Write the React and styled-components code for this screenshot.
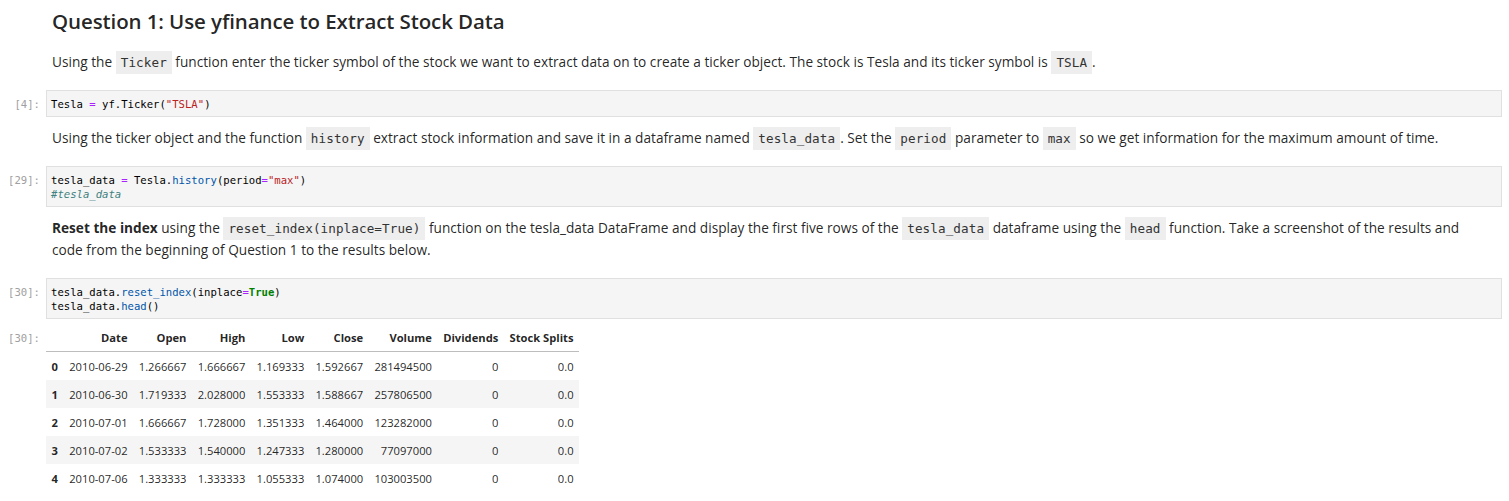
import React from "react";
import styled, { createGlobalStyle } from "styled-components";

const Global = createGlobalStyle`
  html, body { margin: 0; padding: 0; background: #ffffff; }
  body { font-family: "Open Sans", "Noto Sans", sans-serif; color: rgba(0,0,0,0.87); }
`;

const Notebook = styled.div`
  display: flex;
  flex-direction: column;
  padding: 0 7px 0 0;
  width: 1509px;
  box-sizing: border-box;
`;

const Cell = styled.div`
  display: grid;
  grid-template-columns: 40px 1fr;
  column-gap: 6px;
  padding: ${(p) => p.$pad || "0"};
`;

const Prompt = styled.div`
  font-family: "DejaVu Sans Mono", "Liberation Mono", monospace;
  font-size: 10.6px;
  line-height: 14px;
  color: #a0a0a0;
  text-align: right;
  padding-top: ${(p) => p.$top || "7px"};
  white-space: nowrap;
`;

const Markdown = styled.div`
  padding: 0 20px 0 6px;
  min-width: 0;
`;

const Heading = styled.h2`
  margin: 0 0 16px 0;
  font-size: 20.5px;
  line-height: 28px;
  font-weight: 600;
  color: rgba(0,0,0,0.87);
  letter-spacing: -0.1px;
`;

const Para = styled.p`
  margin: 0;
  font-size: 13.67px;
  line-height: 22px;
  color: rgba(0,0,0,0.87);
`;

const Bold = styled.strong`
  font-weight: 700;
`;

const Code = styled.code`
  font-family: "DejaVu Sans Mono", "Liberation Mono", monospace;
  font-size: 12.6px;
  line-height: 1;
  background: #eeeeee;
  color: #333333;
  padding: 4px 5px;
  letter-spacing: 0.1px;
`;

const Editor = styled.pre`
  margin: 0;
  background: #f5f5f5;
  border: 1px solid #e0e0e0;
  padding: 6px 4px 5px;
  font-family: "DejaVu Sans Mono", "Liberation Mono", monospace;
  font-size: 10.6px;
  line-height: 14px;
  color: #000000;
`;

const Tok = styled.span`
  color: ${(p) =>
    ({
      op: "#aa22ff",
      str: "#ba2121",
      prop: "#0055aa",
      kw: "#008000",
      cm: "#408080",
    })[p.$t] || "inherit"};
  font-weight: ${(p) => (p.$t === "kw" ? 700 : 400)};
  font-style: ${(p) => (p.$t === "cm" ? "italic" : "normal")};
`;

const Output = styled.div`
  padding-top: 4px;
`;

const Table = styled.table`
  border-collapse: collapse;
  border-spacing: 0;
  font-size: 11.2px;
  color: rgba(0,0,0,0.87);
`;

const THead = styled.thead`
  border-bottom: 1px solid #bdbdbd;
`;

const Th = styled.th`
  text-align: right;
  font-weight: 700;
  padding: 5.5px 5.6px;
  line-height: 17px;
  white-space: nowrap;
`;

const Row = styled.tr`
  background: ${(p) => (p.$odd ? "#f5f5f5" : "#ffffff")};
`;

const Td = styled.td`
  text-align: right;
  padding: 5.5px 5.6px;
  line-height: 17px;
  white-space: nowrap;
`;

const columns = ["Date", "Open", "High", "Low", "Close", "Volume", "Dividends", "Stock Splits"];

const rows = [
  ["2010-06-29", "1.266667", "1.666667", "1.169333", "1.592667", "281494500", "0", "0.0"],
  ["2010-06-30", "1.719333", "2.028000", "1.553333", "1.588667", "257806500", "0", "0.0"],
  ["2010-07-01", "1.666667", "1.728000", "1.351333", "1.464000", "123282000", "0", "0.0"],
  ["2010-07-02", "1.533333", "1.540000", "1.247333", "1.280000", "77097000", "0", "0.0"],
  ["2010-07-06", "1.333333", "1.333333", "1.055333", "1.074000", "103003500", "0", "0.0"],
];

export default function App() {
  return (
    <>
      <Global />
      <Notebook>
        <Cell $pad="7px 0 17px">
          <div />
          <Markdown>
            <Heading>Question 1: Use yfinance to Extract Stock Data</Heading>
            <Para>
              Using the <Code>Ticker</Code> function enter the ticker symbol of the stock we want to extract data on to
              create a ticker object. The stock is Tesla and its ticker symbol is <Code>TSLA</Code>.
            </Para>
          </Markdown>
        </Cell>

        <Cell>
          <Prompt>[4]:</Prompt>
          <Editor>
            Tesla <Tok $t="op">=</Tok> yf.Ticker(<Tok $t="str">"TSLA"</Tok>)
          </Editor>
        </Cell>

        <Cell $pad="10px 0 17px">
          <div />
          <Markdown>
            <Para>
              Using the ticker object and the function <Code>history</Code> extract stock information and save it in a
              dataframe named <Code>tesla_data</Code>. Set the <Code>period</Code> parameter to <Code>max</Code> so we
              get information for the maximum amount of time.
            </Para>
          </Markdown>
        </Cell>

        <Cell>
          <Prompt>[29]:</Prompt>
          <Editor>
            tesla_data <Tok $t="op">=</Tok> Tesla.<Tok $t="prop">history</Tok>(period<Tok $t="op">=</Tok>
            <Tok $t="str">"max"</Tok>)
            {"\n"}
            <Tok $t="cm">#tesla_data</Tok>
          </Editor>
        </Cell>

        <Cell $pad="10px 0 17px">
          <div />
          <Markdown>
            <Para>
              <Bold>Reset the index</Bold> using the <Code>reset_index(inplace=True)</Code> function on the tesla_data
              DataFrame and display the first five rows of the <Code>tesla_data</Code> dataframe using the{" "}
              <Code>head</Code> function. Take a screenshot of the results and code from the beginning of Question 1 to
              the results below.
            </Para>
          </Markdown>
        </Cell>

        <Cell>
          <Prompt>[30]:</Prompt>
          <Editor>
            tesla_data.<Tok $t="prop">reset_index</Tok>(inplace<Tok $t="op">=</Tok>
            <Tok $t="kw">True</Tok>)
            {"\n"}
            tesla_data.<Tok $t="prop">head</Tok>()
          </Editor>
        </Cell>

        <Cell>
          <Prompt $top="12px">[30]:</Prompt>
          <Output>
            <Table>
              <THead>
                <tr>
                  <Th />
                  {columns.map((c) => (
                    <Th key={c}>{c}</Th>
                  ))}
                </tr>
              </THead>
              <tbody>
                {rows.map((r, i) => (
                  <Row key={i} $odd={i % 2 === 1}>
                    <Th>{i}</Th>
                    {r.map((v, j) => (
                      <Td key={j}>{v}</Td>
                    ))}
                  </Row>
                ))}
              </tbody>
            </Table>
          </Output>
        </Cell>
      </Notebook>
    </>
  );
}
